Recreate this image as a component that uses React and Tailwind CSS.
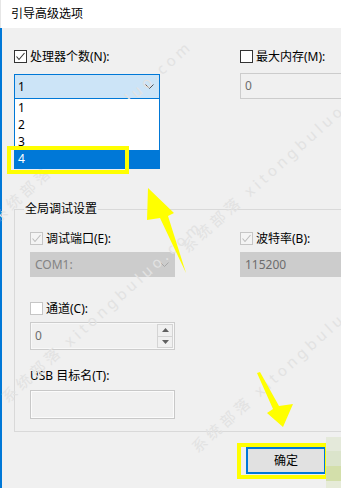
import React from "react";

// --- small win32-ish controls ---
function Check({ checked, disabled, white }) {
  return (
    <div
      className={`w-[13px] h-[13px] shrink-0 border flex items-center justify-center ${
        disabled ? "border-[#c6c6c6]" : "border-[#333333]"
      } ${white ? "bg-white" : disabled ? "bg-[#f4f4f4]" : "bg-white"}`}
    >
      {checked && (
        <svg width="11" height="11" viewBox="0 0 11 11">
          <polyline
            points="1.5,5.5 4,8.5 9.5,2"
            fill="none"
            stroke={disabled ? "#bdbdbd" : "#333333"}
            strokeWidth="1.1"
          />
        </svg>
      )}
    </div>
  );
}

function Chevron({ color }) {
  return (
    <svg width="9" height="5" viewBox="0 0 9 5">
      <polyline points="0.5,0.5 4.5,4.5 8.5,0.5" fill="none" stroke={color} strokeWidth="1" />
    </svg>
  );
}

function CheckRow({ label, checked, disabled, white }) {
  return (
    <div className="flex items-center h-[13px] gap-[3px]">
      <Check checked={checked} disabled={disabled} white={white} />
      <span className="text-[12px] leading-[13px] whitespace-nowrap">{label}</span>
    </div>
  );
}

export default function App() {
  return (
    <div className="relative w-[341px] h-[488px] overflow-hidden bg-[#f0f0f0] text-black [font-family:'Noto_Sans','Noto_Sans_CJK_SC',sans-serif]">
      {/* title bar */}
      <div className="h-[28px] bg-white flex items-center pl-[10px] border-l border-[#e6e6e6]">
        <span className="text-[12px] leading-[12px]">引导高级选项</span>
      </div>

      <div className="h-[460px] border-l-2 border-[#0078d7] pl-[12px] flex flex-col">
        {/* processors / memory */}
        <div className="flex pt-[22px]">
          <div className="relative w-[146px] shrink-0">
            <CheckRow label="处理器个数(N):" checked />
            <div className="mt-[11px] h-[25px] bg-[#cce4f7] border border-[#0078d7] flex items-center justify-between pl-[3px] pr-[5px]">
              <span className="text-[12px] leading-[12px]">1</span>
              <Chevron color="#505050" />
            </div>
            {/* open list */}
            <div className="absolute left-0 top-[49px] w-[146px] bg-white border-x border-b border-[#0078d7] z-10">
              <div className="h-[17px] flex items-center pl-[3px] text-[12px]">1</div>
              <div className="h-[17px] flex items-center pl-[3px] text-[12px]">2</div>
              <div className="h-[17px] flex items-center pl-[3px] text-[12px]">3</div>
              <div className="h-[18px] flex items-center pl-[3px] text-[12px] bg-[#0078d7] text-white">4</div>
            </div>
          </div>
          <div className="ml-[80px] w-[120px] shrink-0">
            <CheckRow label="最大内存(M):" />
            <div className="mt-[10px] h-[26px] border border-[#cccccc] flex items-center pl-[4px]">
              <span className="text-[12px] leading-[12px] text-[#6d6d6d]">0</span>
            </div>
          </div>
        </div>

        {/* global debug group */}
        <div className="relative mt-[110px] w-[360px] shrink-0 border-t border-l border-b border-[#d9d9d9] pt-[22px] pl-[15px] pb-[12px]">
          <span className="absolute left-[9px] -top-[7px] bg-[#f0f0f0] px-[1px] text-[12px] leading-[12px]">
            全局调试设置
          </span>

          <div className="flex">
            <div className="w-[145px] shrink-0">
              <CheckRow label="调试端口(E):" checked disabled />
              <div className="mt-[7px] h-[25px] bg-[#cccccc] border border-[#cccccc] flex items-center justify-between pl-[4px] pr-[5px]">
                <span className="text-[12px] leading-[12px] text-[#838383]">COM1:</span>
                <Chevron color="#a8a8a8" />
              </div>
            </div>
            <div className="ml-[65px] w-[130px] shrink-0">
              <CheckRow label="波特率(B):" checked disabled />
              <div className="mt-[7px] h-[25px] bg-[#cccccc] border border-[#cccccc] flex items-center pl-[4px]">
                <span className="text-[12px] leading-[12px] text-[#6d6d6d]">115200</span>
              </div>
            </div>
          </div>

          <div className="mt-[25px]">
            <CheckRow label="通道(C):" disabled white />
          </div>
          <div className="mt-[7px] w-[145px] h-[28px] border border-[#cccccc] flex items-stretch shadow-[inset_0_0_0_1px_#f8f8f8]">
            <div className="flex-1 flex items-center pl-[4px]">
              <span className="text-[12px] leading-[12px] text-[#6d6d6d]">0</span>
            </div>
            <div className="w-[17px] flex flex-col py-[1px] pr-[1px]">
              <div className="flex-1 border border-[#d4d4d4] flex items-center justify-center">
                <svg width="7" height="4" viewBox="0 0 7 4">
                  <polygon points="0,4 3.5,0 7,4" fill="#606060" />
                </svg>
              </div>
              <div className="flex-1 border border-t-0 border-[#d4d4d4] flex items-center justify-center">
                <svg width="7" height="4" viewBox="0 0 7 4">
                  <polygon points="0,0 3.5,4 7,0" fill="#606060" />
                </svg>
              </div>
            </div>
          </div>

          <div className="mt-[20px] h-[12px] text-[12px] leading-[12px] whitespace-nowrap">
            USB 目标名(T):
          </div>
          <div className="mt-[8px] w-[145px] h-[29px] border border-[#c8c8c8] shadow-[inset_0_0_0_1px_#fbfbfb]" />
        </div>

        {/* footer */}
        <div className="mt-[15px] flex justify-end pr-[15px]">
          <div className="w-[80px] h-[27px] border-2 border-[#0078d7] bg-[#e1e1e1] flex items-center justify-center">
            <span className="text-[12px] leading-[12px]">确定</span>
          </div>
        </div>
      </div>

      {/* watermark */}
      <div className="pointer-events-none absolute inset-0 text-[#e2e2e2] text-[15px] tracking-[4px] whitespace-nowrap">
        <span className="absolute left-[-40px] top-[120px] -rotate-[42deg]">系统部落 xitongbuluo.com</span>
        <span className="absolute left-[-30px] top-[300px] -rotate-[42deg]">系统部落 xitongbuluo.com</span>
        <span className="absolute left-[150px] top-[150px] -rotate-[42deg]">系统部落 xitongbuluo.com</span>
        <span className="absolute left-[160px] top-[350px] -rotate-[42deg]">系统部落 xitongbuluo.com</span>
      </div>

      {/* highlight marks */}
      <div className="absolute left-[7px] top-[146px] w-[122px] h-[28px] border-[4px] border-[#ffff00] z-20" />
      <div className="absolute left-[237px] top-[443px] w-[92px] h-[36px] border-[4px] border-[#ffff00] z-20" />

      {/* blurred corner */}
      <div className="absolute left-[326px] top-[437px] w-[15px] flex flex-col z-30">
        <div className="h-[14px] bg-[#e4e9da]" />
        <div className="h-[15px] bg-[#dbe4cb]" />
        <div className="h-[15px] bg-[#d3dfaa]" />
        <div className="h-[10px] bg-[#e6ebd8]" />
      </div>

      <svg className="absolute inset-0 z-20 pointer-events-none" width="341" height="488" viewBox="0 0 341 488">
        <polygon points="148,188 174,213 168,216 186,273 160,218 147,220" fill="#ffff00" />
        <polygon points="257,373 260,372 279,406 293,404 283,427 267,413 273,409" fill="#ffff00" />
      </svg>
    </div>
  );
}
